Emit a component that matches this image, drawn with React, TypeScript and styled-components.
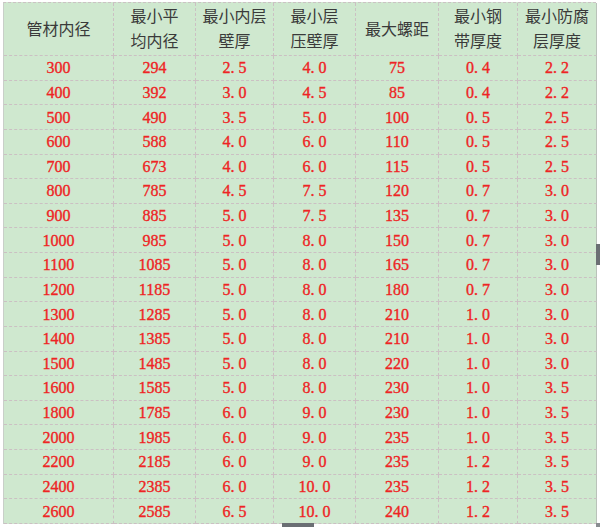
import React from 'react';
import styled, { createGlobalStyle } from 'styled-components';

const GlobalStyle = createGlobalStyle`
  html, body {
    margin: 0;
    padding: 0;
    background: #fff;
  }
  body {
    font-family: "Noto Sans CJK SC", "Liberation Sans", sans-serif;
  }
`;

const Page = styled.div`
  position: relative;
  width: 600px;
  height: 527px;
  overflow: hidden;
  padding: 2px 0 0 3px;
  box-sizing: border-box;
`;

const Table = styled.div`
  display: grid;
  grid-template-columns: 110px 82px 78px 82px 83px 79px 79px;
  grid-template-rows: 53px repeat(19, 24.63px);
  width: 593px;
  background: #cfe8cf;
  border-top: 1px dashed #cbc2c4;
  border-left: 1px solid #c9cfc9;
  box-sizing: border-box;
`;

const Cell = styled.div<{ $last?: boolean }>`
  display: flex;
  align-items: center;
  justify-content: center;
  text-align: center;
  box-sizing: border-box;
  border-bottom: 1px dashed #cbc0c3;
  border-right: ${({ $last }) => ($last ? '1px solid #b9c2b9' : '1px dashed #cbc0c3')};
`;

const HeadCell = styled(Cell)`
  color: #3a3a3a;
  font-family: "Noto Sans CJK SC", sans-serif;
  font-size: 16px;
  line-height: 25px;
  padding-bottom: 2px;
`;

const NumCell = styled(Cell)`
  color: #ee2424;
  font-family: "Liberation Serif", "Noto Sans CJK SC", serif;
  font-size: 16px;
  line-height: 1;
  padding-top: 1px;
  -webkit-text-stroke: 0.35px #ee2424;
`;

const Dot = styled.span`
  display: inline-block;
  width: 0.5em;
  text-align: left;
`;

const ScrollThumb = styled.div<{ $vertical?: boolean }>`
  position: absolute;
  background: #6b6f74;
  ${({ $vertical }) =>
    $vertical
      ? 'right: 0; top: 244px; width: 4px; height: 21px;'
      : 'bottom: 0; left: 282px; width: 32px; height: 4px;'}
`;

const Corner = styled.div`
  position: absolute;
  right: 0;
  bottom: 0;
  width: 4px;
  height: 4px;
  background: #8a8e92;
`;

const headers: string[][] = [
  ['管材内径'],
  ['最小平', '均内径'],
  ['最小内层', '壁厚'],
  ['最小层', '压壁厚'],
  ['最大螺距'],
  ['最小钢', '带厚度'],
  ['最小防腐', '层厚度'],
];

const rows: string[][] = [
  ['300', '294', '2.5', '4.0', '75', '0.4', '2.2'],
  ['400', '392', '3.0', '4.5', '85', '0.4', '2.2'],
  ['500', '490', '3.5', '5.0', '100', '0.5', '2.5'],
  ['600', '588', '4.0', '6.0', '110', '0.5', '2.5'],
  ['700', '673', '4.0', '6.0', '115', '0.5', '2.5'],
  ['800', '785', '4.5', '7.5', '120', '0.7', '3.0'],
  ['900', '885', '5.0', '7.5', '135', '0.7', '3.0'],
  ['1000', '985', '5.0', '8.0', '150', '0.7', '3.0'],
  ['1100', '1085', '5.0', '8.0', '165', '0.7', '3.0'],
  ['1200', '1185', '5.0', '8.0', '180', '0.7', '3.0'],
  ['1300', '1285', '5.0', '8.0', '210', '1.0', '3.0'],
  ['1400', '1385', '5.0', '8.0', '210', '1.0', '3.0'],
  ['1500', '1485', '5.0', '8.0', '220', '1.0', '3.0'],
  ['1600', '1585', '5.0', '8.0', '230', '1.0', '3.5'],
  ['1800', '1785', '6.0', '9.0', '230', '1.0', '3.5'],
  ['2000', '1985', '6.0', '9.0', '235', '1.0', '3.5'],
  ['2200', '2185', '6.0', '9.0', '235', '1.2', '3.5'],
  ['2400', '2385', '6.0', '10.0', '235', '1.2', '3.5'],
  ['2600', '2585', '6.5', '10.0', '240', '1.2', '3.5'],
];

// SimSun-style half-width dot: give the point a full digit cell
const Num = ({ value }: { value: string }) => {
  const [whole, frac] = value.split('.');
  if (frac === undefined) return <>{whole}</>;
  return (
    <span>
      {whole}
      <Dot>.</Dot>
      {frac}
    </span>
  );
};

export default function App() {
  return (
    <>
      <GlobalStyle />
      <Page>
        <Table>
          {headers.map((lines, i) => (
            <HeadCell key={i} $last={i === headers.length - 1}>
              <div>
                {lines.map((l) => (
                  <div key={l}>{l}</div>
                ))}
              </div>
            </HeadCell>
          ))}
          {rows.map((row, r) =>
            row.map((v, c) => (
              <NumCell key={`${r}-${c}`} $last={c === row.length - 1}>
                <Num value={v} />
              </NumCell>
            ))
          )}
        </Table>
        <ScrollThumb $vertical />
        <ScrollThumb />
        <Corner />
      </Page>
    </>
  );
}
